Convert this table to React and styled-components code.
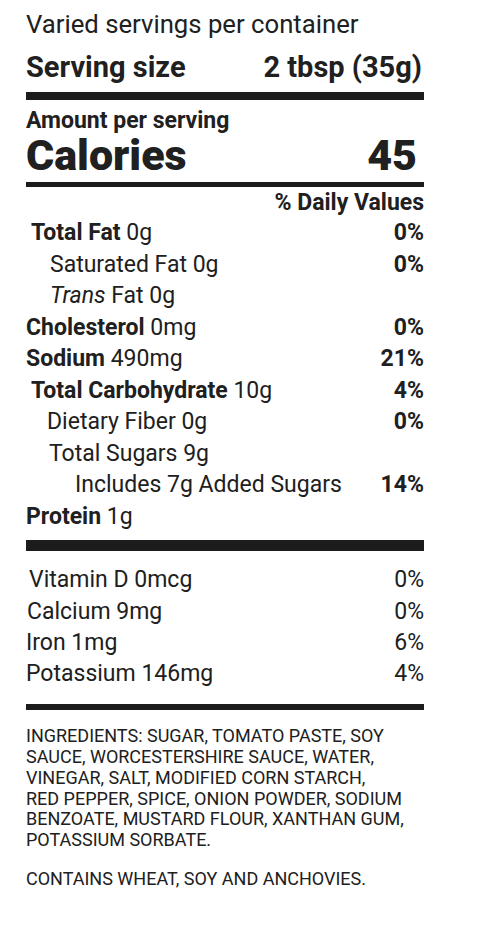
import React from "react";
import styled, { createGlobalStyle } from "styled-components";

const Global = createGlobalStyle`
  html, body { margin: 0; padding: 0; background: #fff; }
  body { font-family: Roboto, "Liberation Sans", Arial, sans-serif; color: #202020; }
`;

const Label = styled.div`
  width: 398px;
  padding: 8.5px 0 0 26px;
  display: flex;
  flex-direction: column;
`;

const Header = styled.div`
  font-size: 25.7px;
  line-height: 30px;
  font-weight: 400;
  white-space: nowrap;
`;

const ServingRow = styled.div`
  margin-top: 12.6px;
  display: flex;
  justify-content: space-between;
  font-size: 29px;
  line-height: 32px;
  font-weight: 700;
  padding-right: 2px;
  white-space: nowrap;
`;

const Bar = styled.div`
  height: ${(p) => p.$h}px;
  margin-top: ${(p) => p.$mt}px;
  background: #1c1c1c;
`;

const Amount = styled.div`
  margin-top: 9.1px;
  font-size: 23px;
  line-height: 24px;
  font-weight: 700;
`;

const CaloriesRow = styled.div`
  margin-top: 2.2px;
  display: flex;
  justify-content: space-between;
  font-size: 43px;
  line-height: 40px;
  font-weight: 900;
  padding-right: 7px;
`;

const DVHead = styled.div`
  margin-top: 4.1px;
  text-align: right;
  font-size: 23px;
  line-height: 24px;
  font-weight: 700;
`;

const Nutrients = styled.div`
  margin-top: ${(p) => p.$mt}px;
  display: flex;
  flex-direction: column;
`;

const Row = styled.div`
  display: flex;
  justify-content: space-between;
  font-size: 23px;
  line-height: ${(p) => p.$lh}px;
  padding-left: ${(p) => p.$indent || 0}px;
  white-space: nowrap;
`;

const Name = styled.span`
  font-weight: ${(p) => (p.$bold ? 700 : 400)};
`;

const Percent = styled.span`
  font-weight: ${(p) => (p.$bold ? 700 : 400)};
`;

const Ingredients = styled.p`
  margin: 16.5px 0 0;
  font-size: 18px;
  line-height: 20.7px;
  text-transform: uppercase;
  white-space: nowrap;
`;

const Contains = styled.p`
  margin: 18.8px 0 0;
  font-size: 18px;
  line-height: 20.7px;
`;

const nutrients = [
  { bold: "Total Fat", rest: " 0g", pct: "0%", indent: 5 },
  { plain: "Saturated Fat 0g", pct: "0%", indent: 24 },
  { trans: true, indent: 24 },
  { bold: "Cholesterol", rest: " 0mg", pct: "0%", indent: 0 },
  { bold: "Sodium", rest: " 490mg", pct: "21%", indent: 0 },
  { bold: "Total Carbohydrate", rest: " 10g", pct: "4%", indent: 5 },
  { plain: "Dietary Fiber 0g", pct: "0%", indent: 21 },
  { plain: "Total Sugars 9g", indent: 23 },
  { plain: "Includes 7g Added Sugars", pct: "14%", indent: 49 },
  { bold: "Protein", rest: " 1g", indent: 0 },
];

const vitamins = [
  { name: "Vitamin D 0mcg", pct: "0%", indent: 3 },
  { name: "Calcium 9mg", pct: "0%", indent: 1 },
  { name: "Iron 1mg", pct: "6%", indent: 0 },
  { name: "Potassium 146mg", pct: "4%", indent: 0 },
];

export default function App() {
  return (
    <>
      <Global />
      <Label>
        <Header>Varied servings per container</Header>
        <ServingRow>
          <span>Serving size</span>
          <span>2 tbsp (35g)</span>
        </ServingRow>
        <Bar $h={8} $mt={8.9} />
        <Amount>Amount per serving</Amount>
        <CaloriesRow>
          <span>Calories</span>
          <span>45</span>
        </CaloriesRow>
        <Bar $h={5} $mt={6.7} />
        <DVHead>% Daily Values</DVHead>
        <Nutrients $mt={2.3}>
          {nutrients.map((n, i) => (
            <Row key={i} $lh={31.5} $indent={n.indent}>
              <Name>
                {n.bold && <Name $bold>{n.bold}</Name>}
                {n.rest}
                {n.plain}
                {n.trans && (
                  <>
                    <i>Trans</i> Fat 0g
                  </>
                )}
              </Name>
              {n.pct && <Percent $bold>{n.pct}</Percent>}
            </Row>
          ))}
        </Nutrients>
        <Bar $h={11} $mt={7.6} />
        <Nutrients $mt={13.5}>
          {vitamins.map((v, i) => (
            <Row key={i} $lh={31.3} $indent={v.indent}>
              <Name>{v.name}</Name>
              <Percent>{v.pct}</Percent>
            </Row>
          ))}
        </Nutrients>
        <Bar $h={6} $mt={14.3} />
        <Ingredients>
          Ingredients: Sugar, Tomato Paste, Soy
          <br />
          Sauce, Worcestershire Sauce, Water,
          <br />
          Vinegar, Salt, Modified Corn Starch,
          <br />
          Red Pepper, Spice, Onion Powder, Sodium
          <br />
          Benzoate, Mustard Flour, Xanthan Gum,
          <br />
          Potassium Sorbate.
        </Ingredients>
        <Contains>CONTAINS WHEAT, SOY AND ANCHOVIES.</Contains>
      </Label>
    </>
  );
}
